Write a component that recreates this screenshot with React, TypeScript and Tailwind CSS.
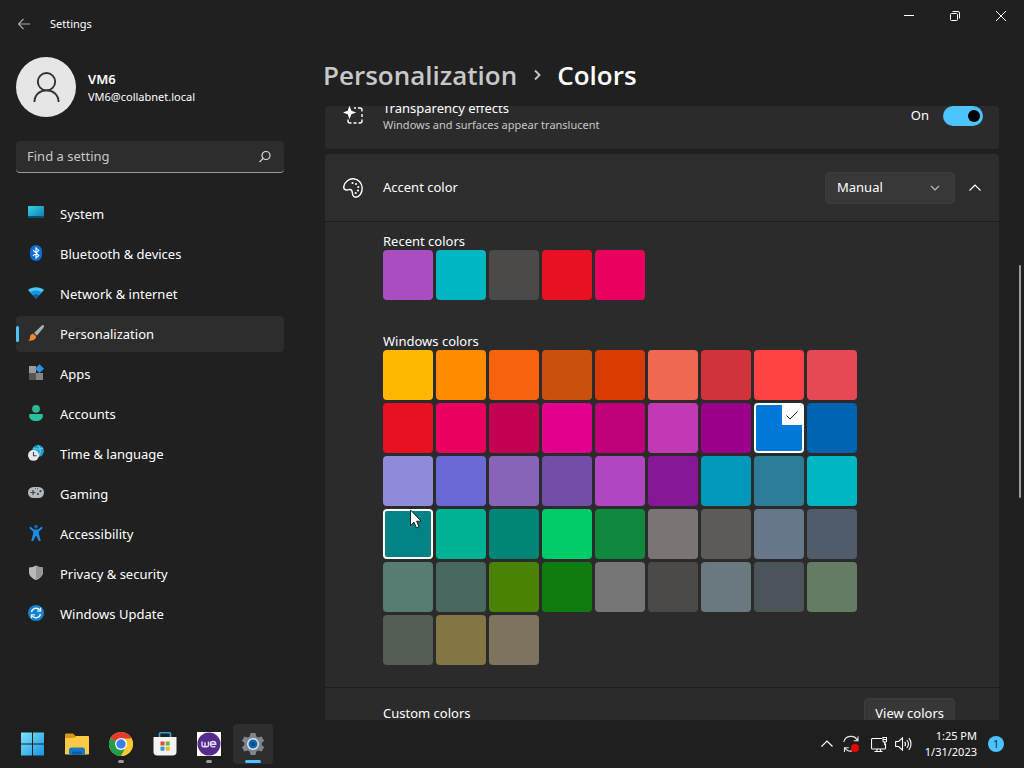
import { useState } from "react";
import type { ReactNode } from "react";

const recentColors = ["#a94dc1", "#00b7c3", "#4c4a48", "#e81123", "#ea005e"];

const windowsColors = [
  "#ffb900", "#ff8c00", "#f7630c", "#ca5010", "#da3b01", "#ef6950", "#d13438", "#ff4343", "#e74856",
  "#e81123", "#ea005e", "#c30052", "#e3008c", "#bf0077", "#c239b3", "#9a0089", "#0078d7", "#0063b1",
  "#8e8cd8", "#6b69d6", "#8764b8", "#744da9", "#b146c2", "#881798", "#0099bc", "#2d7d9a", "#00b7c3",
  "#038387", "#00b294", "#018574", "#00cc6a", "#10893e", "#7a7574", "#5d5a58", "#68768a", "#515c6b",
  "#567c73", "#486860", "#498205", "#107c10", "#767676", "#4c4a48", "#69797e", "#4a5459", "#647c64",
  "#525e54", "#847545", "#7e735f",
];

const navItems: { label: string; icon: ReactNode }[] = [
  {
    label: "System",
    icon: (
      <>
        <defs>
          <linearGradient id="sys" x1="0" y1="0" x2="1" y2="1">
            <stop offset="0" stopColor="#35d3e6" />
            <stop offset="1" stopColor="#0a7cb0" />
          </linearGradient>
        </defs>
        <rect x="0" y="1" width="16" height="12" rx="1" fill="url(#sys)" />
        <path d="M0 11h16v1a1 1 0 0 1-1 1H1a1 1 0 0 1-1-1z" fill="#0d4f72" />
      </>
    ),
  },
  {
    label: "Bluetooth & devices",
    icon: (
      <>
        <rect x="2" y="0" width="12" height="16" rx="6" fill="#0c6fd6" />
        <path d="M5 5.2 10.8 10.600 8 13V3l2.800 2.400L5 10.800" fill="none" stroke="#fff" strokeWidth="1.100" />
      </>
    ),
  },
  {
    label: "Network & internet",
    icon: (
      <>
        <path d="M0 5C4 1.300 12 1.300 16 5L8 13.500z" fill="#45c8f3" />
        <path d="M2.300 7.500C5.500 4.900 10.500 4.900 13.700 7.500L8 13.500z" fill="#1c91de" />
        <path d="M5 10.400c1.800-1.500 4.200-1.500 6 0L8 13.500z" fill="#0a5cab" />
      </>
    ),
  },
  {
    label: "Personalization",
    icon: (
      <>
        <path d="M15.600.3c.8.8.3 1.900-.3 2.700L9 10.600 6 8 13 1.300c.8-.8 1.900-1.600 2.600-1z" fill="#a4b3ba" />
        <path d="M6 8l3 2.600-1.200 1.300L4.900 9z" fill="#6d4a35" />
        <path d="M4.800 8.700 8 11.600c.2 3-3.800 4.800-7.800 3.900 1.700-.6 1.600-1.700 1.800-3.500.2-1.700 1.100-2.900 2.800-3.300z" fill="#ef8a2b" />
      </>
    ),
  },
  {
    label: "Apps",
    icon: (
      <>
        <rect x="1" y="1" width="7" height="7" fill="#9b9b9b" />
        <rect x="1" y="8" width="7" height="7" fill="#555" />
        <rect x="8" y="8" width="7" height="7" fill="#858585" />
        <path d="M11.500-.7 16 3.700 11.500 8.100 7 3.700z" fill="#2c93e8" />
      </>
    ),
  },
  {
    label: "Accounts",
    icon: (
      <>
        <circle cx="8" cy="3.800" r="3.900" fill="#2fb795" />
        <path d="M1 10.500C1 9.500 1.700 9 2.500 9h11c.8 0 1.500.5 1.500 1.500 0 3.500-3 5.500-7 5.500s-7-2-7-5.500z" fill="#2bc09b" />
      </>
    ),
  },
  {
    label: "Time & language",
    icon: (
      <>
        <circle cx="10" cy="6" r="6" fill="#1aa0cf" />
        <path d="M10 0c3 3 3 9 0 12M5 3c3 1.500 7 1.500 10 0" fill="none" stroke="#6fd8ee" />
        <circle cx="5.500" cy="10.300" r="5.500" fill="#e4e8ec" />
        <path d="M5.500 7v3.700h3" fill="none" stroke="#444" strokeWidth="1.100" />
      </>
    ),
  },
  {
    label: "Gaming",
    icon: (
      <>
        <rect x="0" y="2" width="16" height="11" rx="5.500" fill="#b4b9be" />
        <path d="M2.500 7.500h5M5 5v5" stroke="#3d4246" strokeWidth="1.200" />
        <circle cx="10" cy="9" r="1.100" fill="#3d4246" />
        <circle cx="12.500" cy="6.200" r="1.100" fill="#3d4246" />
        <path d="M7 3.700h.8M9 3.700h.8" stroke="#3d4246" />
      </>
    ),
  },
  {
    label: "Accessibility",
    icon: (
      <>
        <circle cx="8" cy="1.600" r="1.800" fill="#1769b5" />
        <path d="M2.200 1.600 6 4.500h4l3.800-2.900 1 1.400-3.900 3.500v2.600l1.900 6.500-1.900.7L8.300 11h-.6l-2.600 5.300-1.900-.7 1.900-6.500V6.500L1.200 3z" fill="#1b8de0" />
      </>
    ),
  },
  {
    label: "Privacy & security",
    icon: (
      <>
        <path d="M8 .5c2 1.300 4.500 1.900 7 1.900v4.800c0 3.500-3 6.200-7 7.800-4-1.600-7-4.300-7-7.800V2.400C3.500 2.400 6 1.800 8 .5z" fill="#b9b9b9" />
        <path d="M8 .5c2 1.300 4.500 1.900 7 1.900v4.800c0 3.500-3 6.200-7 7.800z" fill="#979797" />
      </>
    ),
  },
  {
    label: "Windows Update",
    icon: (
      <>
        <circle cx="8" cy="8" r="8" fill="#1583cf" />
        <path d="M3.500 7a4.700 4.700 0 0 1 8.300-1.900M12.500 9a4.700 4.700 0 0 1-8.300 1.900" fill="none" stroke="#e9f6ff" strokeWidth="1.400" />
        <path d="M12.500 2.800v3.400H9.100M3.500 13.200V9.800h3.400" fill="none" stroke="#e9f6ff" strokeWidth="1.300" />
      </>
    ),
  },
];

function Chevron({ d, size = 12 }: { d: string; size?: number }) {
  return (
    <svg width={size} height={size} viewBox="0 0 12 12" fill="none" stroke="currentColor" strokeWidth="1.2">
      <path d={d} />
    </svg>
  );
}

function WindowControls() {
  const button = "flex h-8 w-[46px] items-center justify-center";
  return (
    <div className="flex">
      <button aria-label="Minimize" className={button}>
        <svg width="10" height="10" viewBox="0 0 10 10" stroke="#fff">
          <path d="M0 4.500h10" />
        </svg>
      </button>
      <button aria-label="Restore" className={button}>
        <svg width="10" height="10" viewBox="0 0 10 10" fill="none" stroke="#fff">
          <rect x=".5" y="2.500" width="7" height="7" rx="1" />
          <path d="M2.500.5H8A1.500 1.500 0 0 1 9.500 2v5.500" />
        </svg>
      </button>
      <button aria-label="Close" className={button}>
        <svg width="10" height="10" viewBox="0 0 10 10" stroke="#fff">
          <path d="M0 0l10 10M10 0L0 10" />
        </svg>
      </button>
    </div>
  );
}

function Sidebar() {
  return (
    <aside className="w-[284px] shrink-0 pl-4">
      <div className="mt-[9px] flex items-center gap-3">
        <div className="flex size-[60px] items-center justify-center rounded-full bg-[#e6e6e6]">
          <svg width="27" height="31" viewBox="0 0 28 32" fill="none" stroke="#333" strokeWidth="2">
            <circle cx="14" cy="10" r="9" />
            <path d="M1.500 31C1.500 23.500 7 19 14 19s12.500 4.500 12.500 12" />
          </svg>
        </div>
        <div className="pt-px">
          <div className="text-[13px] leading-[18px] font-semibold">VM6</div>
          <div className="text-[11px] leading-[18px]">VM6@collabnet.local</div>
        </div>
      </div>
      <label className="mt-6 flex h-8 items-center rounded border-b border-[#9a9a9a] bg-[#2d2d2d] pr-3 pl-[11px]">
        <input
          type="text"
          aria-label="Find a setting"
          placeholder="Find a setting"
          className="min-w-0 flex-1 bg-transparent pt-px text-[13px] outline-none placeholder:text-[#c8c8c8]"
        />
        <svg width="14" height="14" viewBox="0 0 14 14" fill="none" stroke="#ddd" strokeWidth="1.200">
          <circle cx="8" cy="5.500" r="4" />
          <path d="M5.200 8.300 1.500 12" />
        </svg>
      </label>
      <nav className="mt-[23px] flex flex-col gap-1">
        {navItems.map(({ label, icon }) => {
          const active = label === "Personalization";
          return (
            <a
              key={label}
              href="#"
              aria-current={active ? "page" : undefined}
              className={`flex h-9 items-center rounded text-[13px] ${active ? "bg-[#2d2d2d]" : ""}`}
            >
              <span className={`h-4 w-[3px] rounded-full ${active ? "bg-[#4cc2ff]" : ""}`} />
              <svg className="mr-4 ml-[9px] overflow-visible" width="16" height="18" viewBox="0 0 16 18">
                {icon}
              </svg>
              <span className="pt-px">{label}</span>
            </a>
          );
        })}
      </nav>
    </aside>
  );
}

function Swatch({ color, selected, focused, onClick }: { color: string; selected?: boolean; focused?: boolean; onClick?: () => void }) {
  return (
    <button
      aria-label={color}
      aria-pressed={selected}
      onClick={onClick}
      style={{ backgroundColor: color }}
      className={`relative size-[50px] rounded ${selected || focused ? "border-2 border-white" : ""}`}
    >
      {selected && (
        <span className="absolute top-0 right-0 flex h-5 w-5 items-center justify-center bg-white">
          <svg width="12" height="9" viewBox="0 0 12 9" fill="none" stroke="#222">
            <path d="M.5 4.500 4 8 11.500.5" />
          </svg>
        </span>
      )}
      {focused && (
        <svg className="absolute -top-[2px] left-[24px]" width="14" height="20" viewBox="0 0 14 20">
          <path d="M1.500 1v15.500l3.500-3.300 2.400 5.600 2.600-1.100-2.400-5.500h4.600z" fill="#fff" stroke="#111" strokeWidth=".9" />
        </svg>
      )}
    </button>
  );
}

function ColorSettings() {
  const [accent, setAccent] = useState("#0078d7");
  return (
    <div className="min-h-0 flex-1 overflow-hidden rounded-t">
      <section className="-mt-[25px] flex h-[68px] items-center rounded bg-[#2b2b2b] pt-px pr-4 pl-[18px]">
        <svg width="20" height="20" viewBox="0 0 20 20" fill="none" stroke="#fff" strokeWidth="1.400">
          <path d="M6.500-.3 8.300 4.700 13.300 6.500 8.300 8.300 6.500 13.300 4.700 8.300-.3 6.500 4.700 4.700z" fill="#fff" stroke="none" />
          <path d="M11 2h2M15 2h2a2 2 0 0 1 2 2v1.500M19 8v3M19 13.500V15a2 2 0 0 1-2 2h-1.500M13.500 17h-3M8.500 17H7a2 2 0 0 1-2-2v-1.500" />
        </svg>
        <div className="ml-5 flex-1 pt-px">
          <div className="text-[13px] leading-[18px]">Transparency effects</div>
          <div className="text-[11px] leading-4 text-[#c8c8c8]">Windows and surfaces appear translucent</div>
        </div>
        <label className="flex items-center gap-[14px] text-[13px]">
          On
          <input type="checkbox" defaultChecked className="peer sr-only" />
          <span className="flex h-5 w-10 items-center justify-end rounded-full bg-[#4cc2ff] px-[3px]">
            <span className="size-3 rounded-full bg-black" />
          </span>
        </label>
      </section>

      <section className="mt-[5px] rounded-t bg-[#2d2d2d]">
        <div className="flex h-[68px] items-center border-b border-[#1d1d1d] pr-[18px] pl-[18px]">
          <svg width="20" height="20" viewBox="0 0 20 20" fill="none" stroke="#fff" strokeWidth="1.400">
            <path d="M.8 8.500C1.800 3.500 6 .6 10.500.8c5 .3 8.700 4.300 8.700 9.200 0 5-2.700 9.200-6.200 9.200-4.800 0-2.800-4.500-4.300-6.700C7 10 5.500 12.500 3 12 .9 11.500.5 10 .8 8.500z" />
            <g fill="#fff" stroke="none">
              <circle cx="9.500" cy="5" r="1.100" />
              <circle cx="13" cy="6" r="1.100" />
              <circle cx="15.300" cy="9" r="1.100" />
              <circle cx="15" cy="12.500" r="1.100" />
              <circle cx="12.700" cy="15" r="1.100" />
            </g>
          </svg>
          <label htmlFor="accent-mode" className="ml-5 flex-1 pt-px text-[13px]">Accent color</label>
          <div className="relative">
            <select id="accent-mode" className="h-8 w-[130px] appearance-none rounded border border-[#3c3c3c] bg-[#383838] pt-px pl-[11px] text-[13px]">
              <option>Manual</option>
              <option>Automatic</option>
            </select>
            <span className="pointer-events-none absolute top-[10px] right-[14px] text-[#bbb]">
              <Chevron d="M2 4 6 8 10 4" />
            </span>
          </div>
          <button aria-label="Collapse accent color" className="ml-[14px]">
            <Chevron d="M.5 8.500 6 3l5.500 5.500" />
          </button>
        </div>

        <div className="bg-[#2b2b2b] px-[58px] pt-[10px] pb-[22px]">
          <h2 className="text-[13px] leading-[18px]">Recent colors</h2>
          <div className="flex gap-[3px]">
            {recentColors.map((color) => (
              <Swatch key={color} color={color} />
            ))}
          </div>
          <h2 className="mt-8 text-[13px] leading-[18px]">Windows colors</h2>
          <div className="grid grid-cols-[repeat(9,50px)] gap-[3px]">
            {windowsColors.map((color) => (
              <Swatch
                key={color}
                color={color}
                selected={color === accent}
                focused={color === "#038387"}
                onClick={() => setAccent(color)}
              />
            ))}
          </div>
        </div>

        <div className="flex h-[52px] items-center justify-between border-t border-[#1d1d1d] bg-[#2b2b2b] pr-11 pl-[58px] text-[13px]">
          <span className="pt-px">Custom colors</span>
          <button className="h-8 rounded border border-[#3c3c3c] bg-[#373737] px-[10px]">View colors</button>
        </div>
      </section>
    </div>
  );
}

function TaskbarIcon({ label, state, children }: { label: string; state?: "open" | "active"; children: ReactNode }) {
  return (
    <button
      aria-label={label}
      className={`relative flex size-10 items-center justify-center rounded ${state === "active" ? "bg-[#2e2e2e]" : ""}`}
    >
      <svg width="24" height="24" viewBox="0 0 24 24">{children}</svg>
      {state === "open" && <span className="absolute bottom-px h-[3px] w-[6px] rounded-full bg-[#9a9a9a]" />}
      {state === "active" && <span className="absolute bottom-px h-[3px] w-4 rounded-full bg-[#4cc2ff]" />}
    </button>
  );
}

function Taskbar() {
  return (
    <footer className="flex h-12 shrink-0 items-center bg-[#1f1f1f] pr-5 pl-[13px]">
      <div className="flex flex-1 gap-1">
        <TaskbarIcon label="Start">
          <defs>
            <linearGradient id="win" x1="0" y1="0" x2="1" y2="1">
              <stop offset="0" stopColor="#7fe3fb" />
              <stop offset="1" stopColor="#1795e3" />
            </linearGradient>
          </defs>
          <path d="M0 .5h11v11H0zM12 .5h11v11H12zM0 12.500h11v11H0zM12 12.500h11v11H12z" fill="url(#win)" />
        </TaskbarIcon>
        <TaskbarIcon label="File Explorer">
          <path d="M0 3c0-1 .5-1.500 1.500-1.500H8L10.500 4v4H0z" fill="#d9981c" />
          <path d="M0 6h9l2-2h12c.7 0 1 .4 1 1v16.500c0 .6-.4 1-1 1H1c-.6 0-1-.4-1-1z" fill="#fccb45" />
          <path d="M4 22.500V18c0-1.500 1-2.500 2.500-2.500h11c1.500 0 2.500 1 2.500 2.500v4.500z" fill="#1677c9" />
          <path d="M7 19.500h10v3H7z" fill="#0d5ba6" />
        </TaskbarIcon>
        <TaskbarIcon label="Google Chrome" state="open">
          <circle cx="12" cy="12" r="12" fill="#fcc934" />
          <path d="M12 12 1.600 6A12 12 0 0 1 22.400 6z" fill="#e33b2e" />
          <path d="M1.600 6A12 12 0 0 0 12 24l5.200-9L12 12z" fill="#259b4a" />
          <path d="M12 6.500h10.600a12 12 0 0 1-10.600 17.500l5-9z" fill="#fcc934" />
          <circle cx="12" cy="12" r="6" fill="#fff" />
          <circle cx="12" cy="12" r="4.700" fill="#3f7de8" />
        </TaskbarIcon>
        <TaskbarIcon label="Microsoft Store">
          <path d="M6.500 5.500V2c0-.8.500-1.300 1.300-1.300h8.400c.8 0 1.300.5 1.300 1.300v3.500" fill="none" stroke="#2b9fd6" strokeWidth="1.700" />
          <path d="M.5 5h23v15c0 2-1.300 3.500-3.500 3.500H4C1.800 23.500.5 22 .5 20z" fill="#f3f3f3" />
          <path d="M7.500 9.500h4v4h-4z" fill="#e54b2b" />
          <path d="M12.700 9.500h4v4h-4z" fill="#6cb52d" />
          <path d="M7.500 14.700h4v4h-4z" fill="#2a9be0" />
          <path d="M12.700 14.700h4v4h-4z" fill="#f5b51d" />
        </TaskbarIcon>
        <TaskbarIcon label="WE" state="open">
          <path d="M0 0h24v24H0z" fill="#fff" />
          <circle cx="12" cy="12" r="11.500" fill="#552b8c" />
          <path d="M5 9.500v3.700c0 2 3 2 3 0v-3 3c0 2 3.500 2 3.500 0V9.500M13.300 12.200h5.500c0-3.600-5.500-3.600-5.500 0 0 3 3.600 3.200 5 2" fill="none" stroke="#e6dcf0" strokeWidth="1.400" />
        </TaskbarIcon>
        <TaskbarIcon label="Settings" state="active">
          <path
            d="M9.500 1h5l.8 3.400 2 1.100L20.600 4.500l2.500 4.300-2.400 2.300v1.800l2.400 2.300-2.500 4.300-3.300-1-2 1.100-.8 3.400h-5l-.8-3.400-2-1.100-3.300 1L.9 15.200l2.400-2.300v-1.800L.9 8.800l2.500-4.300 3.300 1 2-1.100z"
            fill="#7f858a"
          />
          <circle cx="12" cy="12" r="6" fill="#d9e5ee" />
          <circle cx="12" cy="12" r="4.500" fill="#0f67b0" />
          <circle cx="12" cy="12" r="2.300" fill="#0b4c87" />
        </TaskbarIcon>
      </div>

      <div className="flex items-center text-[11px] leading-4">
        <button aria-label="Show hidden icons">
          <Chevron d="M.5 8.500 6 3l5.500 5.500" />
        </button>
        <button aria-label="Update pending" className="ml-[10px]">
          <svg width="16" height="18" viewBox="0 0 16 18" fill="none" stroke="#e8e8e8" strokeWidth="1.100">
            <path d="M.8 7A7.300 7.300 0 0 1 14.500 5.500M15 1.500v4.300h-4.300M9 16a7 7 0 0 1-7.300-3.500M1.500 17v-4.300h4.300" />
            <circle cx="12" cy="13" r="4" fill="#f00000" stroke="none" />
          </svg>
        </button>
        <button aria-label="Network" className="ml-[12px]">
          <svg width="16" height="17" viewBox="0 0 16 17" fill="none" stroke="#fff" strokeWidth="1.100">
            <path d="M11 2.500H1.500a1 1 0 0 0-1 1V12a1 1 0 0 0 1 1h12a1 1 0 0 0 1-1V7.500M3.500 15.500h8M6 13v2.500M9.500 13v2.500" />
            <path d="M12 1.500h3.500V5a1 1 0 0 1-1 1H13a1 1 0 0 1-1-1zM12 3.500h3.500M13.700 6v3" />
          </svg>
        </button>
        <button aria-label="Volume" className="ml-2">
          <svg width="17" height="16" viewBox="0 0 17 16" fill="none" stroke="#fff" strokeWidth="1.100">
            <path d="M.6 5.500h2.900L7.500 2v12L3.500 10.500H.6z" />
            <path d="M9.700 5.800c1 1.300 1 3.100 0 4.400M11.800 4c1.900 2.300 1.900 5.700 0 8M13.900 2.200c2.800 3.400 2.800 8.200 0 11.600" />
          </svg>
        </button>
        <button className="ml-[13px] text-right">
          <div>1:25 PM</div>
          <div>1/31/2023</div>
        </button>
        <button className="ml-[11px] flex size-4 items-center justify-center rounded-full bg-[#4cc2ff] text-[10px] text-[#1f1f1f]">
          1
        </button>
      </div>
    </footer>
  );
}

export default function App() {
  return (
    <div className="flex h-screen flex-col overflow-hidden bg-[#202020] font-['Noto_Sans',sans-serif] text-white">
      <header className="flex h-12 shrink-0 justify-between pl-[17px]">
        <div className="flex items-center gap-[19px] text-[11px]">
          <button aria-label="Back">
            <svg width="14" height="12" viewBox="0 0 14 12" fill="none" stroke="#aaa" strokeWidth="1.100">
              <path d="M13 6H1.500M6.500 1l-5 5 5 5" />
            </svg>
          </button>
          <span className="pt-px">Settings</span>
        </div>
        <WindowControls />
      </header>

      <div className="flex min-h-0 flex-1">
        <Sidebar />
        <main className="ml-[41px] flex min-w-0 flex-1 flex-col">
          <h1 className="-ml-[2px] flex h-[58px] shrink-0 items-center pb-1 font-['Open_Sans',sans-serif] text-[26px] font-semibold">
            <a href="#" className="text-[#c8c8c8]">Personalization</a>
            <span className="mx-[14px] text-[#c8c8c8]">
              <svg width="12" height="12" viewBox="0 0 12 12" fill="none" stroke="currentColor" strokeWidth="1.900">
                <path d="M4 1.500 8.500 6 4 10.500" />
              </svg>
            </span>
            Colors
          </h1>
          <ColorSettings />
        </main>
        <div className="flex w-[25px] shrink-0 flex-col items-end pr-[3px]">
          <div className="mt-[217px] h-[233px] w-[2px] rounded-full bg-[#9a9a9a]" />
        </div>
      </div>

      <Taskbar />
    </div>
  );
}
